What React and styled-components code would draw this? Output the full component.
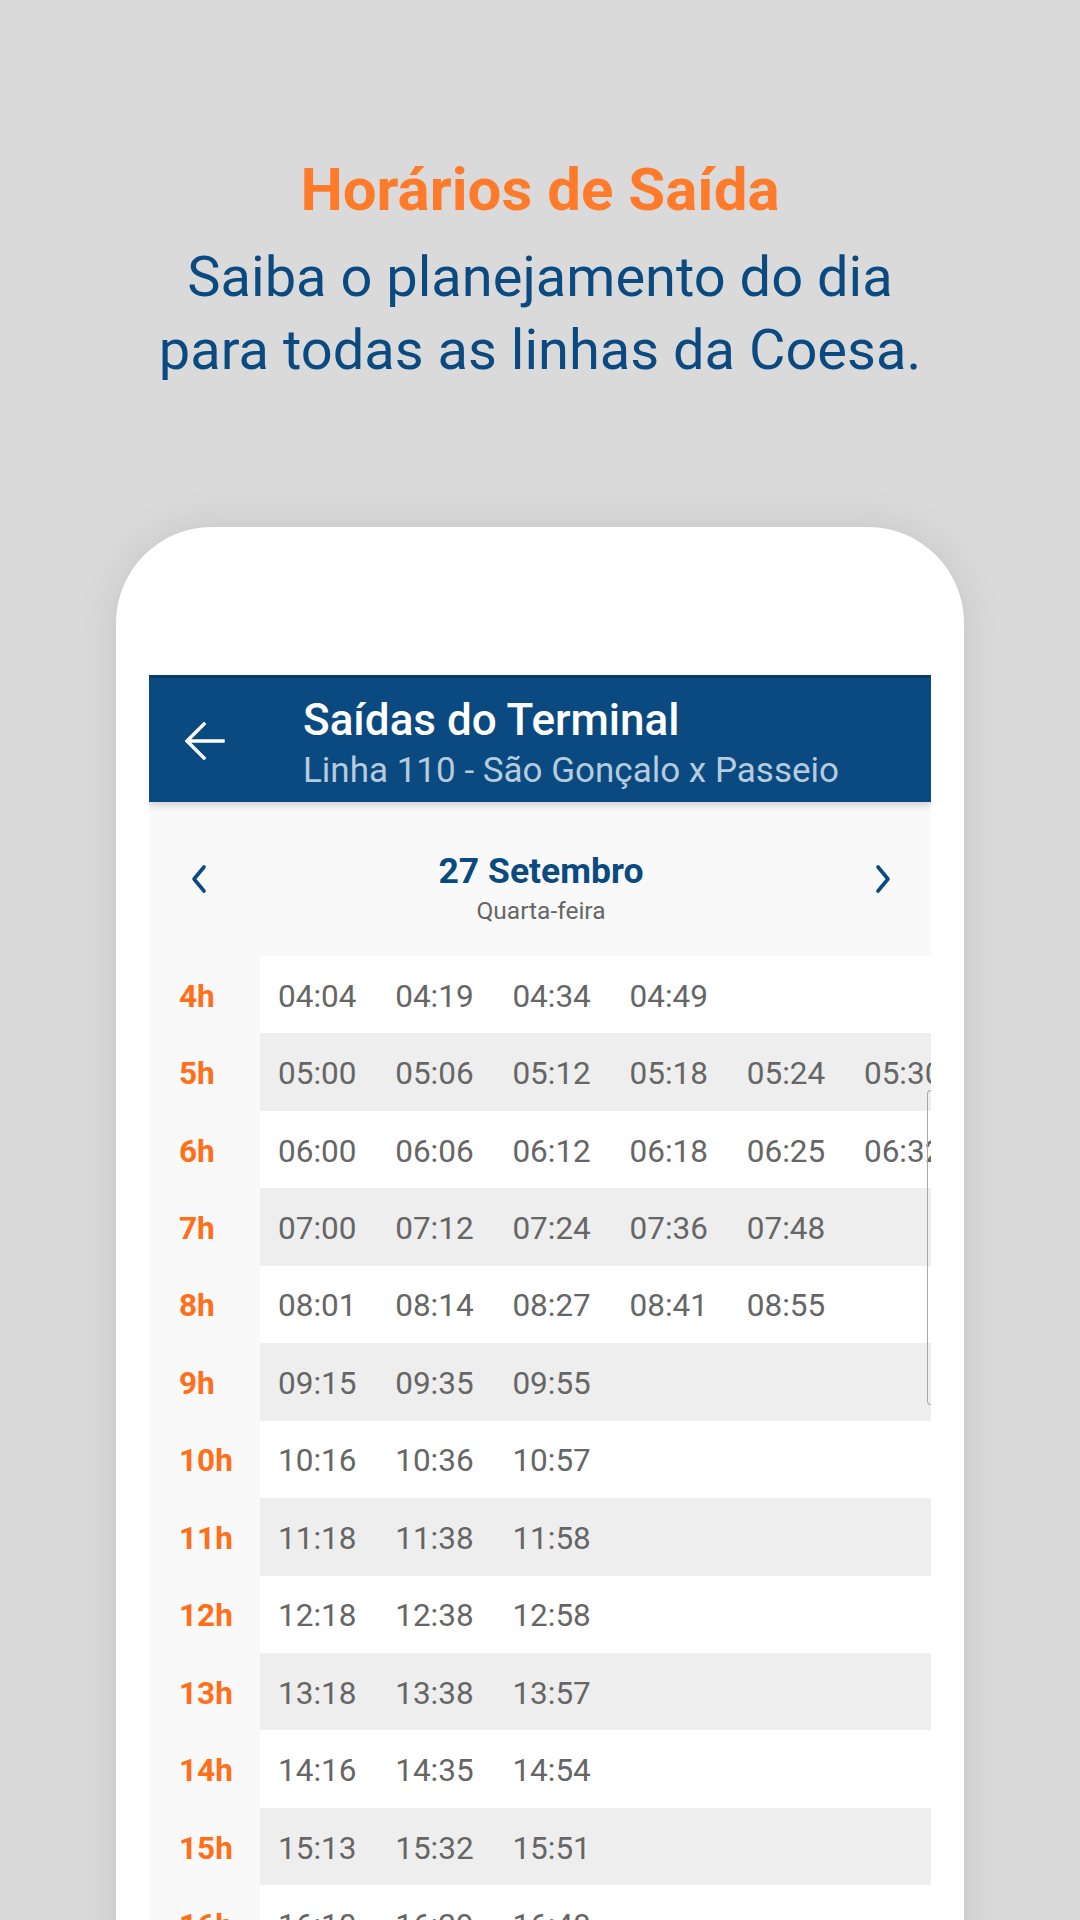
import React from 'react';
import styled, { createGlobalStyle } from 'styled-components';

const GlobalStyle = createGlobalStyle`
  html, body {
    margin: 0;
    padding: 0;
    height: 1920px;
    overflow: hidden;
    background: #dadada;
    font-family: Roboto, 'Noto Sans', sans-serif;
  }
`;

const Page = styled.div`
  width: 1080px;
  height: 1920px;
  overflow: hidden;
  display: flex;
  flex-direction: column;
  align-items: center;
  padding-top: 154px;
  box-sizing: border-box;
`;

const Title = styled.h1`
  margin: 0;
  font-size: 60px;
  line-height: 72px;
  font-weight: 700;
  color: #ff7b2c;
  text-align: center;
`;

const Lead = styled.p`
  margin: 15px 0 0;
  font-size: 56px;
  line-height: 73px;
  font-weight: 400;
  color: #0b4a80;
  text-align: center;
`;

const Phone = styled.div`
  margin-top: 140px;
  width: 848px;
  flex: 1;
  background: #fff;
  border-radius: 96px 96px 0 0;
  box-shadow: 0 0 40px rgba(0, 0, 0, 0.1);
  padding: 148px 33px 0;
  box-sizing: border-box;
`;

const Screen = styled.div`
  position: relative;
  height: 100%;
  overflow: hidden;
  background: #f9f9f9;
`;

const AppBar = styled.header`
  position: relative;
  z-index: 2;
  height: 127px;
  box-sizing: border-box;
  border-top: 3px solid #063c6c;
  background: #0a4a80;
  display: flex;
  align-items: center;
  box-shadow: 0 3px 8px rgba(0, 0, 0, 0.18);
`;

const BackButton = styled.div`
  width: 154px;
  display: flex;
  align-items: center;
  padding-left: 36px;
  box-sizing: border-box;
  margin-top: 2px;
`;

const BarText = styled.div`
  display: flex;
  flex-direction: column;
  padding-top: 8px;
`;

const BarTitle = styled.div`
  font-size: 44px;
  line-height: 50px;
  font-weight: 500;
  color: #fff;
`;

const BarSub = styled.div`
  margin-top: 3px;
  font-size: 35px;
  line-height: 46px;
  color: #b6cbde;
`;

const DateRow = styled.div`
  height: 154px;
  display: flex;
  align-items: center;
  justify-content: space-between;
  padding: 0 37px 0 39px;
  box-sizing: border-box;
`;

const DateText = styled.div`
  align-self: flex-start;
  margin-top: 49px;
  text-align: center;
`;

const DateMain = styled.div`
  font-size: 35.5px;
  line-height: 40px;
  font-weight: 700;
  color: #0a4a80;
`;

const DateDay = styled.div`
  font-size: 24.5px;
  line-height: 40px;
  color: #666;
`;

const Row = styled.div`
  display: flex;
  height: 77.45px;
`;

const Hour = styled.div`
  width: 111px;
  flex-shrink: 0;
  background: #f9f9f9;
  padding-left: 30px;
  padding-top: 3px;
  box-sizing: border-box;
  display: flex;
  align-items: center;
  font-size: 31.5px;
  font-weight: 700;
  color: #ff6f1a;
`;

const Times = styled.div`
  flex: 1;
  display: flex;
  align-items: center;
  padding-left: 18px;
  padding-top: 3px;
  overflow: hidden;
  white-space: nowrap;
  background: ${p => (p.$alt ? '#eeeeee' : '#ffffff')};
`;

const Time = styled.span`
  width: 117.2px;
  flex-shrink: 0;
  font-size: 31.5px;
  color: #666;
`;

const ScrollEdge = styled.div`
  position: absolute;
  right: 0;
  top: 415px;
  height: 313px;
  width: 3px;
  border: 1.5px solid #a8a8a8;
  border-right: none;
  border-radius: 6px 0 0 6px;
`;

const Chevron = ({ dir }) => (
  <svg width="24" height="30" viewBox="0 0 24 30">
    <path
      d={dir === 'left' ? 'M16 3 L6 15 L16 27' : 'M8 3 L18 15 L8 27'}
      fill="none"
      stroke="#0a4a80"
      strokeWidth="3.6"
      strokeLinecap="round"
      strokeLinejoin="round"
    />
  </svg>
);

const schedule = [
  ['4h', ['04:04', '04:19', '04:34', '04:49']],
  ['5h', ['05:00', '05:06', '05:12', '05:18', '05:24', '05:30']],
  ['6h', ['06:00', '06:06', '06:12', '06:18', '06:25', '06:32']],
  ['7h', ['07:00', '07:12', '07:24', '07:36', '07:48']],
  ['8h', ['08:01', '08:14', '08:27', '08:41', '08:55']],
  ['9h', ['09:15', '09:35', '09:55']],
  ['10h', ['10:16', '10:36', '10:57']],
  ['11h', ['11:18', '11:38', '11:58']],
  ['12h', ['12:18', '12:38', '12:58']],
  ['13h', ['13:18', '13:38', '13:57']],
  ['14h', ['14:16', '14:35', '14:54']],
  ['15h', ['15:13', '15:32', '15:51']],
  ['16h', ['16:10', '16:29', '16:48']],
];

const App = () => (
  <>
    <GlobalStyle />
    <Page>
      <Title>Horários de Saída</Title>
      <Lead>
        Saiba o planejamento do dia
        <br />
        para todas as linhas da Coesa.
      </Lead>
      <Phone>
        <Screen>
          <AppBar>
            <BackButton>
              <svg width="40" height="38" viewBox="0 0 40 38">
                <path
                  d="M38 19 H3 M19 2 L2 19 L19 36"
                  fill="none"
                  stroke="#fff"
                  strokeWidth="3.4"
                  strokeLinecap="square"
                />
              </svg>
            </BackButton>
            <BarText>
              <BarTitle>Saídas do Terminal</BarTitle>
              <BarSub>Linha 110 - São Gonçalo x Passeio</BarSub>
            </BarText>
          </AppBar>
          <DateRow>
            <Chevron dir="left" />
            <DateText>
              <DateMain>27 Setembro</DateMain>
              <DateDay>Quarta-feira</DateDay>
            </DateText>
            <Chevron dir="right" />
          </DateRow>
          {schedule.map(([hour, times], i) => (
            <Row key={hour}>
              <Hour>{hour}</Hour>
              <Times $alt={i % 2 === 1}>
                {times.map(t => (
                  <Time key={t}>{t}</Time>
                ))}
              </Times>
            </Row>
          ))}
          <ScrollEdge />
        </Screen>
      </Phone>
    </Page>
  </>
);

export default App;
